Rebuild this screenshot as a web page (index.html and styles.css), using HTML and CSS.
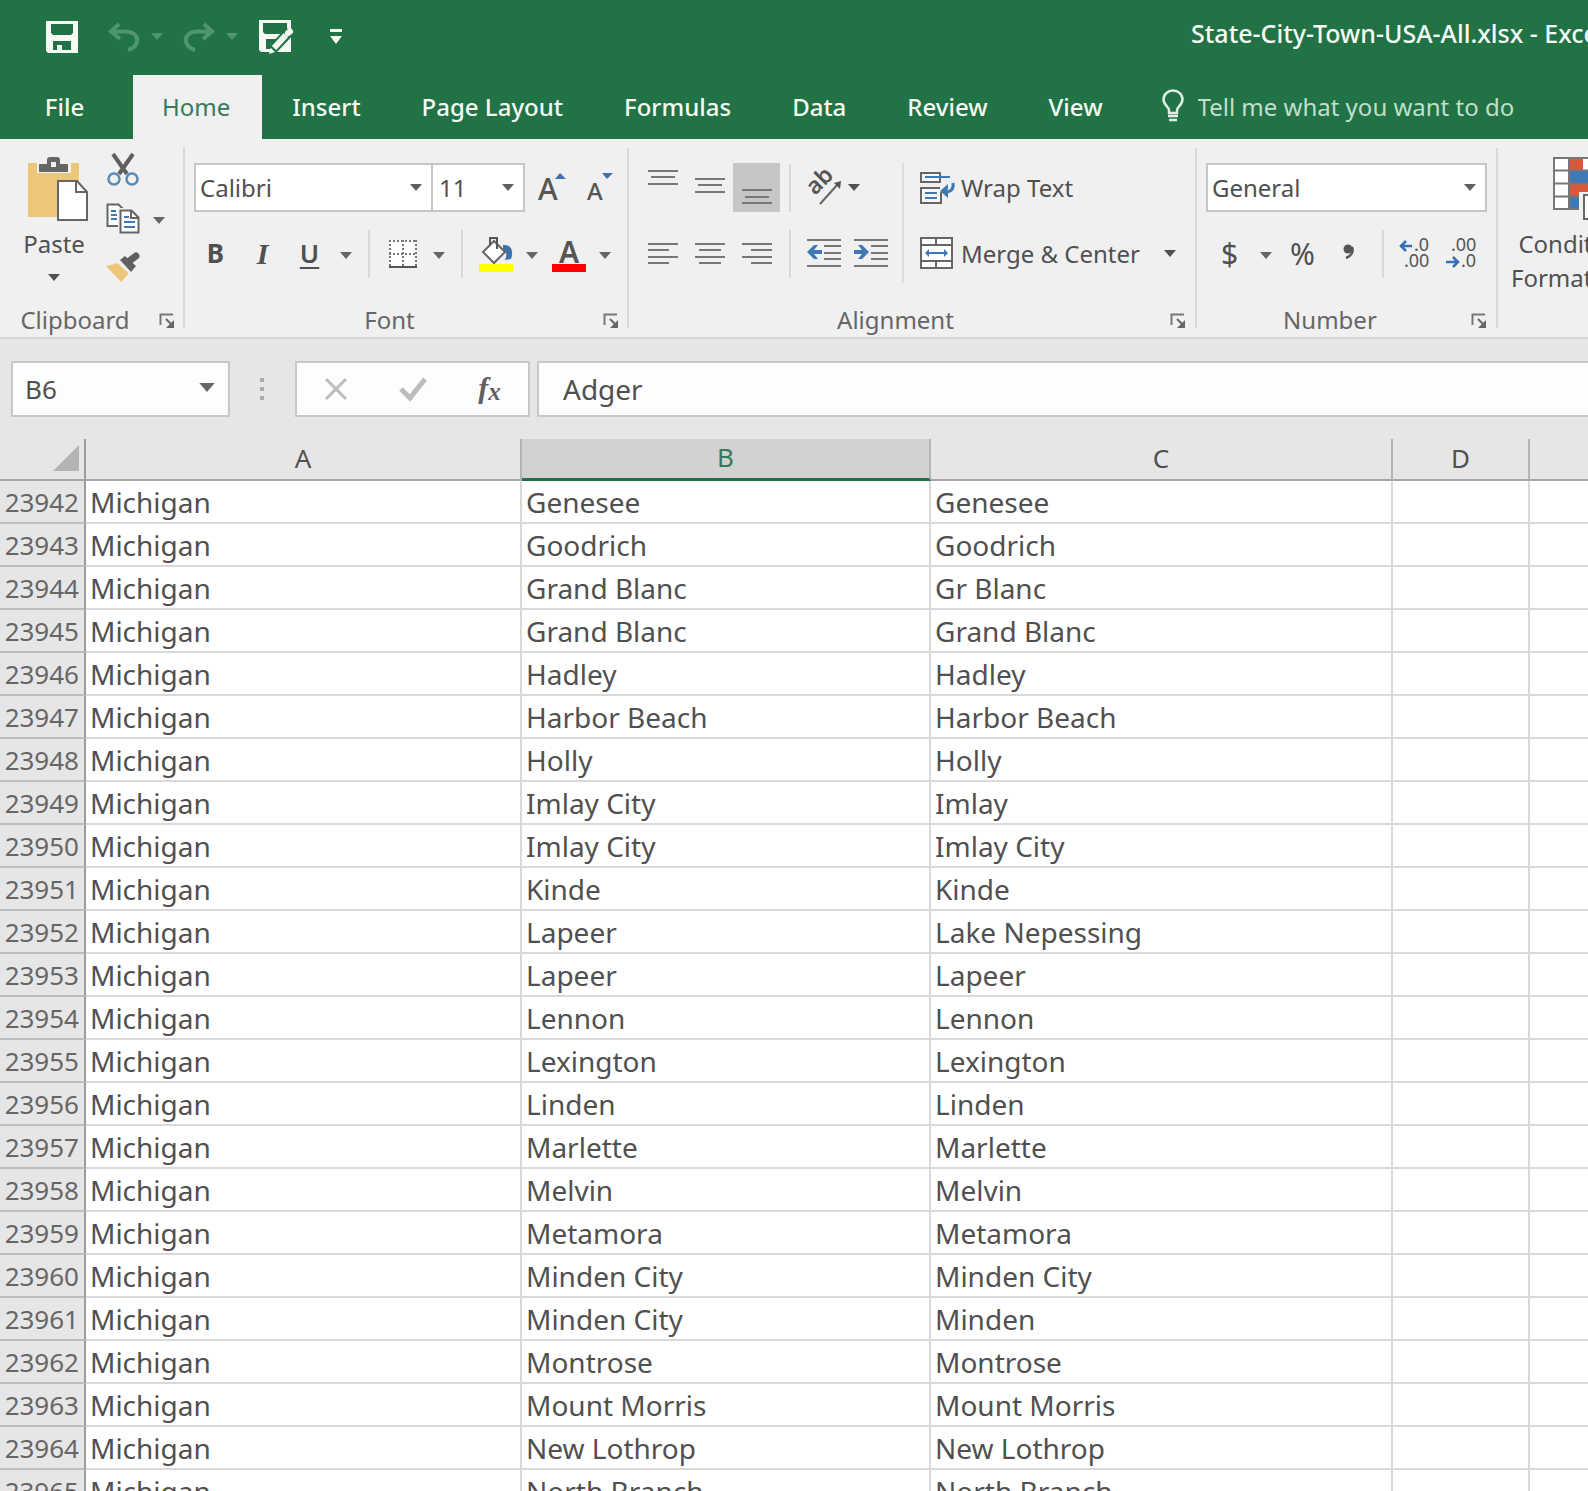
FILE: index.html
```html
<!DOCTYPE html>
<html lang="en">
<head>
<meta charset="utf-8">
<title>State-City-Town-USA-All.xlsx - Excel</title>
<link rel="stylesheet" href="styles.css">
</head>
<body>
<svg class="defs" aria-hidden="true">
  <symbol id="caret" viewBox="0 0 12 7"><path d="M0 0h12L6 7z" fill="currentColor"/></symbol>
  <symbol id="launcher" viewBox="0 0 16 16"><path d="M1.500 12V1.500H14" fill="none" stroke="#777" stroke-width="2"/><path d="M7 6l5 5" stroke="#666" stroke-width="2"/><path d="M15 7v8H7z" fill="#666"/></symbol>
</svg>
<div class="app">
  <header class="titlebar">
    <div class="quick">
      <button class="qbtn" aria-label="Save"><svg width="32" height="32" viewBox="0 0 32 32"><path fill="#f5faf5" fill-rule="evenodd" d="M0 0h32v32H2l-2-2zM5 3v9l2 2h18l2-2V3zM7 20v9h4v-5h5v5h9v-9z"/></svg></button>
      <button class="qbtn undo" aria-label="Undo"><svg width="32" height="30" viewBox="0 0 32 30"><path d="M11 2L3 9.500 12 17M4 9.500h13c8 0 13 4 12 10-.5 4-4 7-9 8.500" fill="none" stroke="#4f9670" stroke-width="4"/></svg></button>
      <button class="qcaret" aria-label="Undo history"><svg width="12" height="7"><use href="#caret"/></svg></button>
      <button class="qbtn redo" aria-label="Redo"><svg width="32" height="30" viewBox="0 0 32 30"><path d="M21 2l8 7.500-9 7.500M28 9.500H15c-8 0-13 4-12 10 .5 4 4 7 9 8.500" fill="none" stroke="#4f9670" stroke-width="4"/></svg></button>
      <button class="qcaret" aria-label="Redo history"><svg width="12" height="7"><use href="#caret"/></svg></button>
      <button class="qbtn saveas" aria-label="Save As"><svg width="34" height="34" viewBox="0 0 34 34"><path fill="#f5faf5" fill-rule="evenodd" d="M0 0h32v32H2l-2-2zM4 3v9l2 2h18l4-2V3zM7 19v10h4v-5h4l4-5z"/><path d="M31 11L13 30" stroke="#217346" stroke-width="10"/><path d="M27 15L15 28" stroke="#f5faf5" stroke-width="6"/><path d="M10 34l2-6 4 4z" fill="#f5faf5"/><path d="M29 13l2-1.500" stroke="#f5faf5" stroke-width="6" stroke-linecap="round"/></svg></button>
      <button class="qbtn custom" aria-label="Customize Quick Access Toolbar"><svg width="14" height="16" viewBox="0 0 14 16"><path d="M1 0h12v3H1zM1 7h12l-6 8z" fill="#f5faf5"/></svg></button>
    </div>
    <div class="doc-title">State-City-Town-USA-All.xlsx - Excel</div>
  </header>
  <nav class="tabs">
    <button class="tab file">File</button>
    <button class="tab active">Home</button>
    <button class="tab">Insert</button>
    <button class="tab">Page Layout</button>
    <button class="tab">Formulas</button>
    <button class="tab">Data</button>
    <button class="tab">Review</button>
    <button class="tab">View</button>
    <label class="tell">
      <svg width="22" height="32" viewBox="0 0 22 32"><path d="M7 23v-3c0-3-5.500-5-5.500-10.500a9.500 9 0 0 1 19 0C20.500 15 15 17 15 20v3z" fill="none" stroke="#e0efe5" stroke-width="2.500"/><path d="M6 26h10M7 30h8" stroke="#e0efe5" stroke-width="2.500"/></svg>
      <input type="text" aria-label="Tell me what you want to do" placeholder="Tell me what you want to do">
    </label>
  </nav>

  <div class="ribbon">
    <section class="group clipboard">
      <div class="body">
        <button class="big paste">
          <svg width="70" height="66" viewBox="-8 0 70 66"><path d="M1 6h51v19H30v35H1z" fill="#ecc679"/><path d="M10 2h34v14H10z" fill="#f0f0f0"/><path d="M12 7h8V3q0-3 3-3h7q3 0 3 3v4h8v8H12z" fill="#666"/><path d="M24 5h5v5h-5z" fill="#f0f0f0"/><path d="M31 24h19l10 11v28H31z" fill="#fff" stroke="#666" stroke-width="2"/><path d="M49 24v11h11" fill="none" stroke="#666" stroke-width="2"/></svg>
          <span>Paste</span>
          <svg width="12" height="7"><use href="#caret"/></svg>
        </button>
        <div class="stack">
          <button class="tool" aria-label="Cut"><svg width="32" height="34" viewBox="0 0 32 34"><path d="M6 1l14 20M26 1L12 21" stroke="#606060" stroke-width="4"/><circle cx="7" cy="26" r="5.500" fill="none" stroke="#5a8ab8" stroke-width="2.500"/><circle cx="25" cy="26" r="5.500" fill="none" stroke="#5a8ab8" stroke-width="2.500"/></svg></button>
          <div class="pair">
            <button class="tool" aria-label="Copy"><svg width="34" height="32" viewBox="0 0 34 32"><path d="M1.500 1.500h11l5 5V23h-16z" fill="#fff" stroke="#666" stroke-width="2"/><path d="M5 8h5M5 12h6M5 16h6" stroke="#3f79b4" stroke-width="2"/><path d="M12 5h18v25H12z" fill="#f0f0f0"/><path d="M14.500 7.500h11l7 7V29.500h-18z" fill="#fff" stroke="#666" stroke-width="2"/><path d="M25 8v7h7" fill="none" stroke="#666" stroke-width="2"/><path d="M18 14h5M18 19h11M18 24h11" stroke="#3f79b4" stroke-width="2"/></svg></button>
            <button class="arrow" aria-label="Copy options"><svg width="12" height="7"><use href="#caret"/></svg></button>
          </div>
          <button class="tool" aria-label="Format Painter"><svg width="34" height="32" viewBox="0 0 34 32"><path d="M0 14l12-3 11 10-8 9z" fill="#ecc679"/><path d="M14 8l5-4 11 10-5 6z" fill="#606060"/><path d="M22 10l8-6" stroke="#606060" stroke-width="7" stroke-linecap="round"/><path d="M12 10l12 11" stroke="#f0f0f0" stroke-width="2"/></svg></button>
        </div>
      </div>
      <footer class="caption"><span>Clipboard</span><button aria-label="Clipboard settings"><svg width="16" height="16"><use href="#launcher"/></svg></button></footer>
    </section>
    <div class="divider"></div>

    <section class="group font">
      <div class="body rows">
        <div class="row">
          <div class="combo name"><select aria-label="Font"><option>Calibri</option></select><svg width="12" height="7"><use href="#caret"/></svg></div>
          <div class="combo size"><select aria-label="Font Size"><option>11</option></select><svg width="12" height="7"><use href="#caret"/></svg></div>
          <button class="tool grow" aria-label="Increase Font Size"><svg width="30" height="34" viewBox="0 0 30 34"><text x="1" y="29" font-size="30" font-weight="500">A</text><path d="M18 8l5-6 6 6z" fill="#3f72ad"/></svg></button>
          <button class="tool" aria-label="Decrease Font Size"><svg width="30" height="34" viewBox="0 0 30 34"><text x="3" y="29" font-size="24" font-weight="500">A</text><path d="M18 2h11l-6 6z" fill="#3f72ad"/></svg></button>
        </div>
        <div class="row">
          <button class="tool bold">B</button>
          <button class="tool italic">I</button>
          <button class="tool underline">U</button>
          <button class="arrow" aria-label="Underline options"><svg width="12" height="7"><use href="#caret"/></svg></button>
          <div class="sep"></div>
          <button class="tool" aria-label="Borders"><svg width="30" height="30" viewBox="0 0 30 30"><path d="M1 1h27v26H1z" fill="#fff"/><path d="M1 2h28M1 15h28M2 1v26M15 1v26M28 1v26" stroke="#777" stroke-width="2" stroke-dasharray="2 2"/><path d="M1 28h28" stroke="#555" stroke-width="2"/></svg></button>
          <button class="arrow" aria-label="Borders options"><svg width="12" height="7"><use href="#caret"/></svg></button>
          <div class="sep"></div>
          <button class="tool" aria-label="Fill Color"><svg width="36" height="36" viewBox="0 0 36 36"><path d="M25 9c8-1 11 6 8 14l-6 1c2-5 2-8-2-10z" fill="#3f72ad"/><path d="M5 16L16 5l11 11-11 11z" fill="#fff" stroke="#666" stroke-width="2"/><path d="M12 9V2h7v11" fill="none" stroke="#555" stroke-width="2"/><path d="M1 28h34v8H1z" fill="#ff0"/></svg></button>
          <button class="arrow" aria-label="Fill options"><svg width="12" height="7"><use href="#caret"/></svg></button>
          <button class="tool" aria-label="Font Color"><svg width="36" height="36" viewBox="0 0 36 36"><text x="8" y="27" font-size="30" font-weight="600">A</text><path d="M1 28h34v8H1z" fill="#f00"/></svg></button>
          <button class="arrow" aria-label="Font color options"><svg width="12" height="7"><use href="#caret"/></svg></button>
        </div>
      </div>
      <footer class="caption"><span>Font</span><button aria-label="Font settings"><svg width="16" height="16"><use href="#launcher"/></svg></button></footer>
    </section>
    <div class="divider"></div>

    <section class="group alignment">
      <div class="body columns">
        <div class="rows">
          <div class="row">
            <button class="tool" aria-label="Top Align"><svg width="30" height="36" viewBox="0 0 30 36"><path d="M0 1h30M3 7h24M0 14h30" stroke="#777" stroke-width="2"/></svg></button>
            <button class="tool" aria-label="Middle Align"><svg width="30" height="36" viewBox="0 0 30 36"><path d="M0 9h30M3 15h24M0 22h30" stroke="#777" stroke-width="2"/></svg></button>
            <button class="tool pressed" aria-label="Bottom Align"><svg width="30" height="36" viewBox="0 0 30 36"><path d="M0 20h30M3 27h24M0 33h30" stroke="#777" stroke-width="2"/></svg></button>
            <div class="sep"></div>
            <button class="orient" aria-label="Orientation"><svg width="36" height="36" viewBox="0 0 36 36"><text x="0" y="0" font-size="23" font-weight="600" transform="translate(9 26) rotate(-45)">ab</text><path d="M14 34L32 14" stroke="#666" stroke-width="2"/><path d="M35 11l-1 8-6-6z" fill="#555"/></svg><svg width="12" height="7"><use href="#caret"/></svg></button>
          </div>
          <div class="row">
            <button class="tool" aria-label="Align Left"><svg width="30" height="24" viewBox="0 0 30 24"><path d="M0 2h30M0 8h21M0 15h30M0 21h21" stroke="#777" stroke-width="2"/></svg></button>
            <button class="tool" aria-label="Center"><svg width="30" height="24" viewBox="0 0 30 24"><path d="M0 2h30M4 8h22M0 15h30M4 21h22" stroke="#777" stroke-width="2"/></svg></button>
            <button class="tool" aria-label="Align Right"><svg width="30" height="24" viewBox="0 0 30 24"><path d="M0 2h30M9 8h21M0 15h30M9 21h21" stroke="#777" stroke-width="2"/></svg></button>
            <div class="sep"></div>
            <button class="tool" aria-label="Decrease Indent"><svg width="34" height="30" viewBox="0 0 34 30"><path d="M0 1h34M17 7h17M17 14h17M17 20h17M0 27h34" stroke="#777" stroke-width="2"/><path d="M0 13l7-7h4l-4 5h8v4H7l4 5H7z" fill="#3f79b4"/></svg></button>
            <button class="tool" aria-label="Increase Indent"><svg width="34" height="30" viewBox="0 0 34 30"><path d="M0 1h34M17 7h17M17 14h17M17 20h17M0 27h34" stroke="#777" stroke-width="2"/><path d="M15 13L8 6H4l4 5H0v4h8l-4 5h4z" fill="#3f79b4"/></svg></button>
          </div>
        </div>
        <div class="tall-sep"></div>
        <div class="rows">
          <button class="wide"><svg width="34" height="34" viewBox="0 0 34 34"><path d="M1 2h19v9H1zM21 21v11H1V17h19" fill="#f7f7f7" stroke="#666" stroke-width="2"/><path d="M5 6h25M5 22h12M5 27h12" stroke="#3f79b4" stroke-width="2"/><path d="M33 12c1 6-2 9-8 9" fill="none" stroke="#3f79b4" stroke-width="3"/><path d="M20 20l8-7v5l-2 2 2 2v5z" fill="#3f79b4"/></svg><span>Wrap Text</span></button>
          <button class="wide"><svg width="34" height="34" viewBox="0 0 34 34"><path d="M1 1h31v30H1z" fill="#fff" stroke="#666" stroke-width="2"/><path d="M1 8h31M1 24h31M16 1v7M16 24v7" stroke="#666" stroke-width="2"/><path d="M7 16h19" stroke="#3f79b4" stroke-width="2"/><path d="M5 16l4-4v8zM28 16l-4-4v8z" fill="#3f79b4"/></svg><span>Merge &amp; Center</span><svg class="push" width="12" height="7"><use href="#caret"/></svg></button>
        </div>
      </div>
      <footer class="caption"><span>Alignment</span><button aria-label="Alignment settings"><svg width="16" height="16"><use href="#launcher"/></svg></button></footer>
    </section>
    <div class="divider"></div>

    <section class="group number">
      <div class="body rows">
        <div class="combo format"><select aria-label="Number Format"><option>General</option></select><svg width="12" height="7"><use href="#caret"/></svg></div>
        <div class="row">
          <button class="tool symbol">$</button>
          <button class="arrow" aria-label="Accounting options"><svg width="12" height="7"><use href="#caret"/></svg></button>
          <button class="tool symbol">%</button>
          <button class="tool" aria-label="Comma Style"><svg width="14" height="34" viewBox="0 0 14 34"><circle cx="6" cy="12" r="4.500" fill="#555"/><path d="M10 10c2 5-1 9-6 11" fill="none" stroke="#555" stroke-width="2.500"/></svg></button>
          <div class="sep"></div>
          <button class="tool" aria-label="Increase Decimal"><svg width="36" height="34" viewBox="0 0 36 34"><text x="16" y="14" font-size="18">.0</text><text x="6" y="30" font-size="18">.00</text><path d="M2 9h12M8 4L3 9l5 5" fill="none" stroke="#3470b5" stroke-width="2.500"/></svg></button>
          <button class="tool" aria-label="Decrease Decimal"><svg width="36" height="34" viewBox="0 0 36 34"><text x="6" y="14" font-size="18">.00</text><text x="16" y="30" font-size="18">.0</text><path d="M1 25h12M8 20l5 5-5 5" fill="none" stroke="#3470b5" stroke-width="2.500"/></svg></button>
        </div>
      </div>
      <footer class="caption"><span>Number</span><button aria-label="Number settings"><svg width="16" height="16"><use href="#launcher"/></svg></button></footer>
    </section>
    <div class="divider"></div>

    <section class="group styles">
      <div class="body">
        <button class="big">
          <svg width="60" height="66" viewBox="0 0 60 66"><path d="M1 2h52v51H1z" fill="#fff"/><path d="M17 2h13v12H17zM17 28h22v12H17z" fill="#d9593a"/><path d="M17 15h30v12H17zM17 41h9v12h-9z" fill="#4078b8"/><path d="M1 2h52v51H1zM1 14.500h52M1 27.500h52M1 40.500h52M16 2v51" fill="none" stroke="#777" stroke-width="2"/><path d="M26 36h34v30H26z" fill="#f0f0f0"/><path d="M31 39h28v24H31z" fill="#fff" stroke="#666" stroke-width="2"/></svg>
          <span>Conditional<br>Formatting <svg width="12" height="7"><use href="#caret"/></svg></span>
        </button>
      </div>
    </section>
  </div>

  <div class="formula-bar">
    <div class="name-box"><input type="text" aria-label="Name Box" value="B6"><button aria-label="Name list"><svg width="16" height="9"><use href="#caret"/></svg></button></div>
    <svg class="grip" width="6" height="24" viewBox="0 0 6 24"><path d="M1 1h4v4H1zM1 10h4v4H1zM1 19h4v4H1z" fill="#aaa"/></svg>
    <div class="entry">
      <button aria-label="Cancel"><svg width="24" height="22" viewBox="0 0 24 22"><path d="M2 1l20 20M22 1L2 21" stroke="#bdbdbd" stroke-width="3"/></svg></button>
      <button aria-label="Enter"><svg width="28" height="24" viewBox="0 0 28 24"><path d="M2 12l9 9L26 2" fill="none" stroke="#bdbdbd" stroke-width="5"/></svg></button>
      <button class="fx" aria-label="Insert Function">f<span>x</span></button>
    </div>
    <input class="formula" type="text" aria-label="Formula Bar" value="Adger">
  </div>

  <main class="sheet">
    <table>
      <colgroup><col class="c-num"><col class="c-a"><col class="c-b"><col class="c-c"><col class="c-d"><col></colgroup>
      <thead><tr><th class="corner" aria-label="Select All"><svg width="26" height="26" viewBox="0 0 26 26"><path d="M26 0v26H0z" fill="#b4b4b4"/></svg></th><th>A</th><th class="selected">B</th><th>C</th><th>D</th><th></th></tr></thead>
      <tbody>
        <tr><th>23942</th><td>Michigan</td><td>Genesee</td><td>Genesee</td><td></td><td></td></tr>
        <tr><th>23943</th><td>Michigan</td><td>Goodrich</td><td>Goodrich</td><td></td><td></td></tr>
        <tr><th>23944</th><td>Michigan</td><td>Grand Blanc</td><td>Gr Blanc</td><td></td><td></td></tr>
        <tr><th>23945</th><td>Michigan</td><td>Grand Blanc</td><td>Grand Blanc</td><td></td><td></td></tr>
        <tr><th>23946</th><td>Michigan</td><td>Hadley</td><td>Hadley</td><td></td><td></td></tr>
        <tr><th>23947</th><td>Michigan</td><td>Harbor Beach</td><td>Harbor Beach</td><td></td><td></td></tr>
        <tr><th>23948</th><td>Michigan</td><td>Holly</td><td>Holly</td><td></td><td></td></tr>
        <tr><th>23949</th><td>Michigan</td><td>Imlay City</td><td>Imlay</td><td></td><td></td></tr>
        <tr><th>23950</th><td>Michigan</td><td>Imlay City</td><td>Imlay City</td><td></td><td></td></tr>
        <tr><th>23951</th><td>Michigan</td><td>Kinde</td><td>Kinde</td><td></td><td></td></tr>
        <tr><th>23952</th><td>Michigan</td><td>Lapeer</td><td>Lake Nepessing</td><td></td><td></td></tr>
        <tr><th>23953</th><td>Michigan</td><td>Lapeer</td><td>Lapeer</td><td></td><td></td></tr>
        <tr><th>23954</th><td>Michigan</td><td>Lennon</td><td>Lennon</td><td></td><td></td></tr>
        <tr><th>23955</th><td>Michigan</td><td>Lexington</td><td>Lexington</td><td></td><td></td></tr>
        <tr><th>23956</th><td>Michigan</td><td>Linden</td><td>Linden</td><td></td><td></td></tr>
        <tr><th>23957</th><td>Michigan</td><td>Marlette</td><td>Marlette</td><td></td><td></td></tr>
        <tr><th>23958</th><td>Michigan</td><td>Melvin</td><td>Melvin</td><td></td><td></td></tr>
        <tr><th>23959</th><td>Michigan</td><td>Metamora</td><td>Metamora</td><td></td><td></td></tr>
        <tr><th>23960</th><td>Michigan</td><td>Minden City</td><td>Minden City</td><td></td><td></td></tr>
        <tr><th>23961</th><td>Michigan</td><td>Minden City</td><td>Minden</td><td></td><td></td></tr>
        <tr><th>23962</th><td>Michigan</td><td>Montrose</td><td>Montrose</td><td></td><td></td></tr>
        <tr><th>23963</th><td>Michigan</td><td>Mount Morris</td><td>Mount Morris</td><td></td><td></td></tr>
        <tr><th>23964</th><td>Michigan</td><td>New Lothrop</td><td>New Lothrop</td><td></td><td></td></tr>
        <tr><th>23965</th><td>Michigan</td><td>North Branch</td><td>North Branch</td><td></td><td></td></tr>
      </tbody>
    </table>
  </main>
</div>
</body>
</html>
```
FILE: styles.css
```css
* { box-sizing: border-box; }
body { margin: 0; font-family: "Noto Sans", "Open Sans", sans-serif; font-size: 24px; color: #505050; }
button, input, select { font: inherit; color: inherit; margin: 0; padding: 0; border: 0; background: none; border-radius: 0; }
svg { display: block; flex: none; overflow: visible; }
svg text { font-family: "Noto Sans", sans-serif; fill: #555; }
.defs { width: 0; height: 0; position: absolute; }
.app { display: flex; flex-direction: column; height: 100vh; overflow: hidden; background: #e6e6e6; }

/* Title bar */
.titlebar { display: flex; flex: none; height: 75px; background: #217346; color: #f5faf5; overflow: hidden; }
.quick { display: flex; flex: 0 0 75%; align-items: center; padding: 0 0 2px 46px; }
.qbtn { display: flex; }
.undo { margin-left: 30px; }
.redo { margin-left: 20px; }
.qcaret { display: flex; margin-left: 11px; color: #4f9670; }
.saveas { margin-left: 21px; }
.custom { margin-left: 36px; }
.doc-title { font-size: 25px; font-weight: 500; line-height: 66px; white-space: nowrap; }

/* Tabs */
.tabs { display: flex; flex: none; height: 64px; background: #217346; overflow: hidden; }
.tab { flex: none; padding: 0 31px 2px 30px; color: #f5faf5; font-weight: 500; }
.tab.file { width: 133px; padding: 0 4px 2px 0; }
.tab.active { padding: 0 32px 2px 29px; background: #f0f0f0; color: #38795a; font-weight: 400; }
.tell { display: flex; flex: 1; align-items: center; gap: 14px; padding: 0 0 2px 28px; }
.tell input { flex: 1; min-width: 0; color: #fff; outline: 0; }
.tell input::placeholder { color: #c2dfcd; opacity: 1; }

/* Ribbon */
.ribbon { display: flex; flex: none; height: 200px; background: #f0f0f0; border-bottom: 2px solid #d5d5d5; overflow: hidden; }
.divider { flex: none; width: 2px; margin: 9px 0; background: #d8d8d8; }
.group { display: flex; flex: none; flex-direction: column; }
.body { display: flex; height: 165px; }
.body.rows, .body.columns { padding-top: 24px; }
.rows { display: flex; flex-direction: column; gap: 17px; }
.row { display: flex; align-items: center; height: 49px; }
.tool { display: flex; align-items: center; justify-content: center; width: 47px; height: 49px; line-height: 49px; }
.arrow { display: flex; align-items: center; justify-content: center; width: 26px; height: 49px; padding-top: 3px; color: #666; }
.sep { width: 2px; height: 48px; margin: 0 9px; background: #d8d8d8; }
.caption { display: flex; align-items: center; height: 31px; color: #666; }
.caption span { flex: 1; text-align: center; }
.caption button { display: flex; justify-content: center; width: 33px; padding-top: 2px; }

.big { display: flex; flex-direction: column; align-items: center; line-height: 34px; }
.paste { width: 80px; margin-left: 14px; padding-top: 18px; }
.paste span { padding-top: 4px; margin-bottom: 13px; }
.stack { display: flex; flex-direction: column; padding: 6px 11px 0 5px; }
.pair { display: flex; }
.pressed { background: #c6c6c6; }

.combo { display: grid; align-items: center; height: 49px; background: #fff; border: 2px solid #c6c6c6; }
.combo select { grid-area: 1 / 1; width: 100%; height: 100%; padding-left: 4px; appearance: none; }
.combo svg { grid-area: 1 / 1; justify-self: end; margin-right: 9px; pointer-events: none; color: #606060; }
.font { padding-left: 7px; }
.font .caption { margin-left: -7px; }
.font .row { padding-right: 5px; }
.combo.name { width: 239px; margin-left: 2px; }
.combo.size { width: 92px; border-left: 0; }
.combo.size select { padding-left: 6px; }
.grow { margin-left: 3px; }
.bold { font-size: 26px; font-weight: 700; }
.italic { font-family: "Liberation Serif", serif; font-size: 30px; font-style: italic; font-weight: 700; }
.underline { font-size: 26px; font-weight: 600; text-decoration: underline; text-decoration-thickness: 2px; text-underline-offset: 4px; }

.alignment .body { padding-left: 10px; }
.orient { display: flex; align-items: center; gap: 6px; padding-left: 6px; }
.tall-sep { width: 2px; height: 120px; margin: 0 8px; background: #dcdcdc; }
.wide { display: flex; align-items: center; gap: 7px; height: 49px; padding: 0 19px 0 8px; white-space: nowrap; }
.push { margin-left: 17px; }

.number .body { padding-left: 9px; padding-right: 9px; }
.combo.format { width: 281px; }
.symbol { font-size: 30px; }

.styles { padding-left: 13px; }
.styles .big { padding-top: 17px; white-space: nowrap; }
.styles .big span { padding-top: 5px; }
.styles .big span svg { display: inline-block; }

/* Formula bar */
.formula-bar { display: flex; flex: none; align-items: center; height: 100px; padding: 0 0 0 11px; font-size: 26px; }
.name-box, .entry, .formula { height: 56px; background: #fdfdfd; border: 2px solid #c8c8c8; }
.name-box { display: flex; flex: none; width: 219px; }
.name-box input { flex: 1; min-width: 0; padding-left: 12px; }
.name-box button { display: flex; align-items: center; padding: 0 13px 4px; color: #666; }
.grip { margin: 0 30px 0 29px; }
.entry { display: flex; flex: none; width: 235px; margin-right: 7px; }
.entry button { display: flex; flex: 1; align-items: center; justify-content: center; }
.entry .fx { font-family: "Liberation Serif", serif; font-size: 30px; font-style: italic; font-weight: 700; color: #606060; padding-bottom: 2px; }
.fx span { font-size: 25px; padding-top: 7px; }
.formula { flex: 1; min-width: 0; padding-left: 24px; border-right: 0; font-size: 28px; }

/* Worksheet */
.sheet { flex: 1; min-height: 0; overflow: hidden; background: #fff; }
table { width: 100%; table-layout: fixed; border-collapse: separate; border-spacing: 0; }
.c-num { width: 86px; }
.c-a { width: 436px; }
.c-b { width: 409px; }
.c-c { width: 462px; }
.c-d { width: 137px; }
th, td { height: 43px; padding: 2px 4px 0; border: solid #d9d9d9; border-width: 0 2px 2px 0; font-weight: 400; line-height: 39px; white-space: nowrap; overflow: hidden; }
td { font-size: 28px; text-align: left; }
thead th { height: 42px; padding: 0 5px 2px; line-height: 38px; font-size: 26px; background: #e6e6e6; border-color: #b4b4b4; border-bottom-color: #a6a6a6; }
thead .selected { background: #d2d2d2; color: #38795a; border-bottom: 3px solid #217346; line-height: 37px; }
.corner svg { margin-left: auto; }
tbody th { padding-right: 5px; padding-left: 0; text-align: right; font-size: 26px; color: #666; background: #e6e6e6; border-color: #bdbdbd; border-right-color: #9b9b9b; }
thead .corner { border-right-color: #9b9b9b; }
th:last-child, td:last-child { border-right: 0; }
```
